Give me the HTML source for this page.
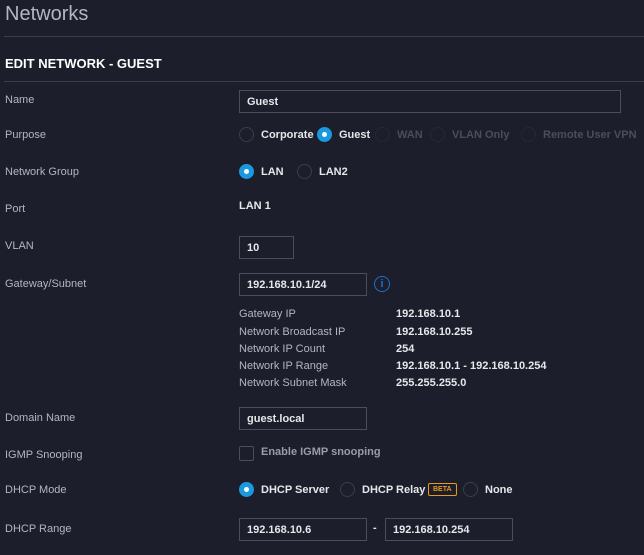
<!DOCTYPE html><html><head><style>
body{margin:0;width:644px;height:555px;background:#1c1e2b;font-family:"Liberation Sans",sans-serif;color:#e6e7ea;position:relative;overflow:hidden}
.a{position:absolute;white-space:nowrap}
.l{position:absolute;left:5px;font-size:11px;color:#b3b6bf}
.in{position:absolute;border:1px solid #4a4e5b;box-sizing:border-box;height:23px;font-size:11px;font-weight:bold;padding:5px 7px;color:#e6e7ea}
.r{position:absolute;width:15px;height:15px;border-radius:50%;border:1px solid #3a3e4b;box-sizing:border-box}
.r.on{background:#1a98e0;border-color:#1a98e0}
.r.on:after{content:"";position:absolute;left:4px;top:4px;width:5px;height:5px;border-radius:50%;background:#fff}
.t{position:absolute;font-size:11px;font-weight:bold}
.d{color:#4b4e5a}
.k{position:absolute;left:239px;font-size:11px;color:#b3b6bf}
.v{position:absolute;left:396px;font-size:11px;font-weight:bold}
</style></head><body>
<div class="a" style="left:5px;top:3px;font-size:20px;color:#b3b6bf;font-weight:300">Networks</div>
<div class="a" style="left:4px;top:36px;width:640px;height:1px;background:#3a3d4a"></div>
<div class="a" style="left:5px;top:56px;font-size:13px;font-weight:bold;color:#fff">EDIT NETWORK - GUEST</div>
<div class="a" style="left:4px;top:81px;width:640px;height:1px;background:#3a3d4a"></div>

<div class="l" style="top:94px">Name</div>
<div class="in" style="left:239px;top:90px;width:382px">Guest</div>

<div class="l" style="top:129px">Purpose</div>
<div class="r" style="left:239px;top:127px"></div><div class="t" style="left:261px;top:129px">Corporate</div>
<div class="r on" style="left:317px;top:127px"></div><div class="t" style="left:339px;top:129px">Guest</div>
<div class="r" style="left:375px;top:127px;border-color:#262936"></div><div class="t d" style="left:397px;top:129px">WAN</div>
<div class="r" style="left:430px;top:127px;border-color:#262936"></div><div class="t d" style="left:452px;top:129px">VLAN Only</div>
<div class="r" style="left:521px;top:127px;border-color:#262936"></div><div class="t d" style="left:543px;top:129px">Remote User VPN</div>

<div class="l" style="top:166px">Network Group</div>
<div class="r on" style="left:239px;top:164px"></div><div class="t" style="left:261px;top:166px">LAN</div>
<div class="r" style="left:297px;top:164px"></div><div class="t" style="left:319px;top:166px">LAN2</div>

<div class="l" style="top:203px">Port</div>
<div class="t" style="left:239px;top:200px">LAN 1</div>

<div class="l" style="top:240px">VLAN</div>
<div class="in" style="left:239px;top:236px;width:55px">10</div>

<div class="l" style="top:278px">Gateway/Subnet</div>
<div class="in" style="left:239px;top:273px;width:128px">192.168.10.1/24</div>
<div class="a" style="left:374px;top:276px;width:14px;height:14px;border:1.5px solid #1e6fd0;border-radius:50%;color:#1e6fd0;font-size:11px;font-weight:bold;text-align:center;line-height:14px">i</div>

<div class="k" style="top:308px">Gateway IP</div><div class="v" style="top:308px">192.168.10.1</div>
<div class="k" style="top:326px">Network Broadcast IP</div><div class="v" style="top:326px">192.168.10.255</div>
<div class="k" style="top:343px">Network IP Count</div><div class="v" style="top:343px">254</div>
<div class="k" style="top:360px">Network IP Range</div><div class="v" style="top:360px">192.168.10.1 - 192.168.10.254</div>
<div class="k" style="top:377px">Network Subnet Mask</div><div class="v" style="top:377px">255.255.255.0</div>

<div class="l" style="top:412px">Domain Name</div>
<div class="in" style="left:239px;top:407px;width:128px">guest.local</div>

<div class="l" style="top:449px">IGMP Snooping</div>
<div class="a" style="left:239px;top:446px;width:15px;height:15px;border:1px solid #4a4e5b;box-sizing:border-box;border-radius:2px"></div>
<div class="t" style="left:261px;top:446px;color:#9a9da6">Enable IGMP snooping</div>

<div class="l" style="top:484px">DHCP Mode</div>
<div class="r on" style="left:239px;top:482px"></div><div class="t" style="left:261px;top:484px">DHCP Server</div>
<div class="r" style="left:340px;top:482px"></div><div class="t" style="left:362px;top:484px">DHCP Relay</div>
<div class="a" style="left:428px;top:483px;border:1px solid #e89a1c;border-radius:2px;color:#e89a1c;font-size:7px;font-weight:bold;padding:1px 4px;line-height:9px">BETA</div>
<div class="r" style="left:463px;top:482px"></div><div class="t" style="left:485px;top:484px">None</div>

<div class="l" style="top:523px">DHCP Range</div>
<div class="in" style="left:239px;top:518px;width:128px">192.168.10.6</div>
<div class="t" style="left:373px;top:522px">-</div>
<div class="in" style="left:385px;top:518px;width:128px">192.168.10.254</div>
</body></html>
